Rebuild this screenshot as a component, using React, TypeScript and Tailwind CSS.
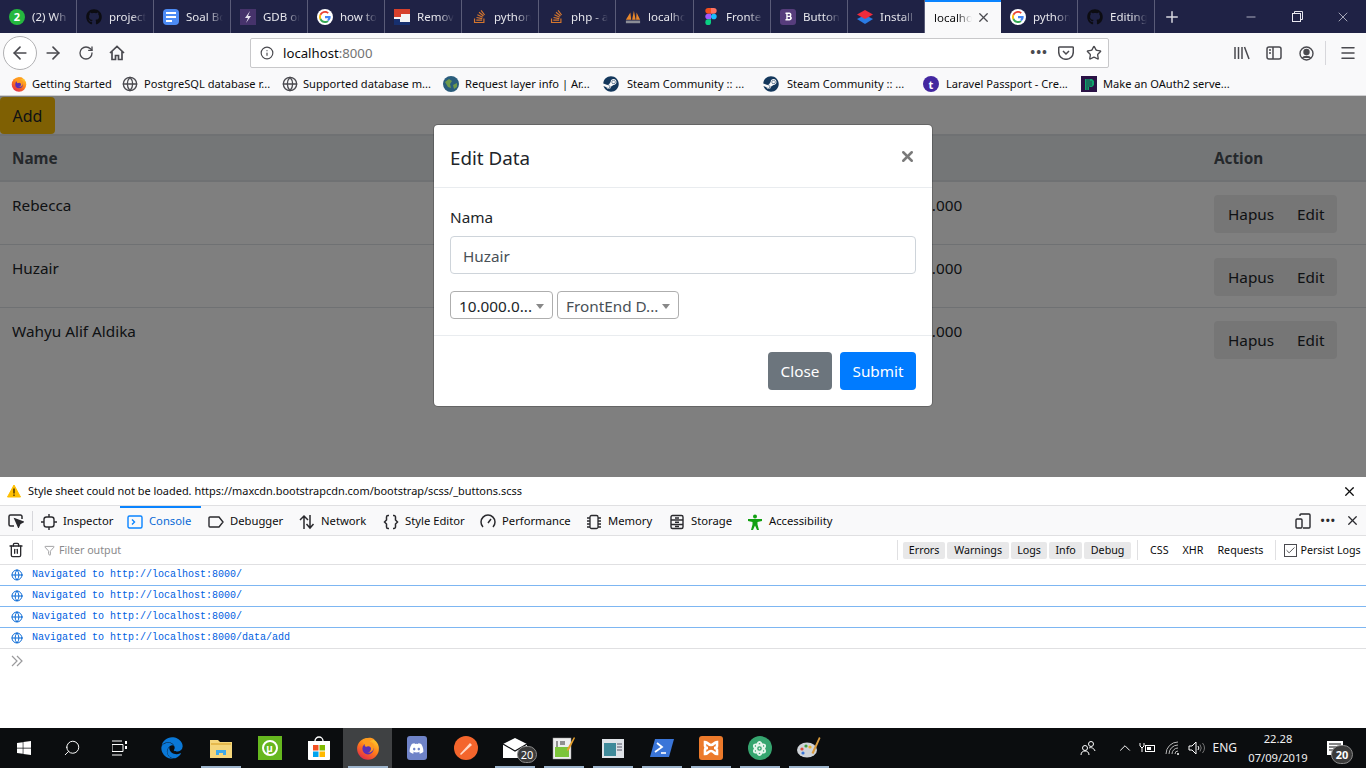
import { ReactNode } from 'react';
import {
  ArrowLeft, ArrowRight, RotateCw, Info, Star, X, Plus, Minus, Trash2, Filter, Globe, Menu, Check, ChevronUp, Search,
} from 'lucide-react';
import { FaDiscord, FaEdge, FaGithub, FaSteam, FaStackOverflow, FaWindows, FaAtom, FaBold } from 'react-icons/fa';

const Google = ({ size = 16 }: { size?: number }) => (
  <svg width={size} height={size} viewBox="0 0 48 48">
    <circle cx="24" cy="24" r="24" fill="#fff" />
    <path fill="#EA4335" d="M24 11c3.400 0 5.900 1.200 7.800 3l3.700-3.700C33 8 29 6 24 6 17 6 11 10 8 16l4.400 3.400C14 14.600 18.600 11 24 11z" />
    <path fill="#4285F4" d="M41 24.500c0-1.300-.1-2.300-.3-3.500H24v6.500h9.700c-.4 2.100-1.600 4-3.500 5.300l4.300 3.300C38.800 32.500 41 28.800 41 24.500z" />
    <path fill="#FBBC05" d="M12.400 28.600C12 27.300 11.700 25.700 11.700 24s.3-3.300.7-4.600L8 16c-1.300 2.400-2 5.100-2 8s.7 5.600 2 8z" />
    <path fill="#34A853" d="M24 42c5 0 9-1.600 11-4.500l-4.300-3.300c-1.600 1.100-3.800 1.800-6.700 1.800-5.400 0-10-3.600-11.600-8.400L8 32c3 6 9 10 16 10z" />
  </svg>
);

const Firefox = ({ size = 16 }: { size?: number }) => (
  <svg width={size} height={size} viewBox="0 0 32 32">
    <defs>
      <linearGradient id="ffg" x1="0.8" y1="0" x2="0.2" y2="1">
        <stop offset="0" stopColor="#ffd32e" />
        <stop offset="0.5" stopColor="#ff7a1a" />
        <stop offset="1" stopColor="#e0234f" />
      </linearGradient>
    </defs>
    <circle cx="16" cy="17" r="14.500" fill="url(#ffg)" />
    <circle cx="16" cy="17" r="7.500" fill="#5b2fb5" />
    <path d="M9 6c4-4 11-5 16-1-3 0-6 1-7 3 3 0 6 2 6 6 0 5-4 9-9 8 3 0 5-2 5-5 0-2-2-4-5-3-3 1-4-1-3-3-2 0-3-2-3-5z" fill="#ff9a1f" />
  </svg>
);

const Figma = () => (
  <svg width="12" height="17" viewBox="0 0 12 18">
    <path fill="#f24e1e" d="M0 3a3 3 0 013-3h3v6H3a3 3 0 01-3-3z" />
    <path fill="#ff7262" d="M6 0h3a3 3 0 010 6H6z" />
    <path fill="#a259ff" d="M0 9a3 3 0 013-3h3v6H3a3 3 0 01-3-3z" />
    <circle cx="9" cy="9" r="3" fill="#1abcfe" />
    <path fill="#0acf83" d="M0 15a3 3 0 013-3h3v3a3 3 0 01-6 0z" />
  </svg>
);

const tabs: { label: string; icon: ReactNode; w?: string }[] = [
  {
    label: '(2) Wh',
    icon: <span className="flex h-4 w-4 items-center justify-center rounded-full bg-[#25b83f] text-[11px] font-bold leading-none text-white">2</span>,
  },
  { label: 'project', icon: <FaGithub size={16} className="text-[#0c0c12]" /> },
  {
    label: 'Soal Bo',
    icon: (
      <span className="flex h-4 w-4 flex-col justify-center gap-[2px] rounded-sm bg-[#4c8bf5] px-[3px]">
        <span className="h-[2px] bg-white" />
        <span className="h-[2px] bg-white" />
        <span className="h-[2px] w-[6px] bg-white" />
      </span>
    ),
  },
  {
    label: 'GDB or',
    icon: (
      <svg width="16" height="16" viewBox="0 0 16 16">
        <rect width="16" height="16" fill="#46336b" />
        <path d="M10 2L5 9h3l-2 5 5-7H8z" fill="#e8e4f0" />
      </svg>
    ),
  },
  { label: 'how to', icon: <Google /> },
  {
    label: 'Remov',
    icon: (
      <svg width="16" height="16" viewBox="0 0 16 16">
        <rect width="16" height="16" fill="#f4f4f4" />
        <path d="M0 0h16v5H7v3H0z" fill="#d6402b" />
        <path d="M0 10h6v3h10v3H0z" fill="#17306f" />
      </svg>
    ),
  },
  { label: 'python', icon: <FaStackOverflow size={15} className="text-[#d5762e]" /> },
  { label: 'php - a', icon: <FaStackOverflow size={15} className="text-[#d5762e]" /> },
  {
    label: 'localho',
    w: 'w-[78px]',
    icon: (
      <svg width="18" height="16" viewBox="0 0 18 16">
        <path d="M1 11L6 3l1 8zM8 11l2-10 2 10zM12.500 11L13 3l4 8z" fill="#e8872b" />
        <rect x="1" y="12" width="16" height="3" fill="#8b8d96" />
      </svg>
    ),
  },
  { label: 'Fronte', icon: <Figma /> },
  {
    label: 'Button',
    icon: <span className="flex h-4 w-4 items-center justify-center rounded-[3px] bg-[#563d7c]"><FaBold size={9} className="text-white" /></span>,
  },
  {
    label: 'Install',
    icon: (
      <svg width="16" height="16" viewBox="0 0 16 16">
        <path d="M0 10l8-4 8 4-8 5z" fill="#2a7be4" />
        <path d="M0 5.500L8 1l8 4.500-8 4.500z" fill="#ee2b3c" />
      </svg>
    ),
  },
];

const Tab = ({ label, icon, w = 'w-[77px]' }: { label: string; icon: ReactNode; w?: string }) => (
  <div className={`flex h-[33px] shrink-0 items-center border-r border-[#5a5c78] pl-[9px] ${w}`}>
    <span className="flex w-4 shrink-0 items-center justify-center">{icon}</span>
    <span className="ml-[7px] w-[37px] overflow-hidden whitespace-nowrap text-[11.500px] text-[#e6e6ec] [mask-image:linear-gradient(to_right,black_60%,transparent)]">
      {label}
    </span>
  </div>
);

const bookmarks: { label: string; icon: ReactNode; w: string; gap: string }[] = [
  { label: 'Getting Started', icon: <Firefox />, w: 'w-[111px]', gap: 'gap-[5px]' },
  { label: 'PostgreSQL database r...', icon: <Globe size={16} className="text-[#4a4a4f]" />, w: 'w-[160px]', gap: 'gap-[6px]' },
  { label: 'Supported database m...', icon: <Globe size={16} className="text-[#4a4a4f]" />, w: 'w-[161px]', gap: 'gap-[5px]' },
  {
    label: 'Request layer info | Ar...',
    icon: (
      <svg width="16" height="16" viewBox="0 0 16 16">
        <circle cx="8" cy="8" r="8" fill="#2a5d7c" />
        <path d="M2 6l4-3 3 2-2 3 1 4-3-1zM10 9l4-2 0 4-3 2z" fill="#6f9a4a" />
      </svg>
    ),
    w: 'w-[160px]',
    gap: 'gap-[6px]',
  },
  { label: 'Steam Community :: ...', icon: <FaSteam size={16} className="text-[#14385c]" />, w: 'w-[160px]', gap: 'gap-[8px]' },
  { label: 'Steam Community :: ...', icon: <FaSteam size={16} className="text-[#14385c]" />, w: 'w-[160px]', gap: 'gap-[8px]' },
  {
    label: 'Laravel Passport - Cre...',
    icon: <span className="flex h-4 w-4 items-center justify-center rounded-full bg-[#4327a0] text-[11px] font-bold leading-none text-white">t</span>,
    w: 'w-[158px]',
    gap: 'gap-[7px]',
  },
  {
    label: 'Make an OAuth2 serve...',
    icon: (
      <svg width="16" height="16" viewBox="0 0 16 16">
        <rect width="16" height="16" fill="#2a1245" />
        <path d="M4 3h7l2 2v4l-2 2H8v3H4z" fill="#0fa36b" />
        <path d="M6 3v11M8 3v8M10 5v5" stroke="#2a1245" strokeWidth="0.700" />
      </svg>
    ),
    w: 'w-[150px]',
    gap: 'gap-[6px]',
  },
];

const people = [
  { name: 'Rebecca', job: 'FrontEnd Developer' },
  { name: 'Huzair', job: 'FrontEnd Developer' },
  { name: 'Wahyu Alif Aldika', job: 'BackEnd Developer' },
];

const devTabs: { label: string; icon: ReactNode; w: string; active?: boolean }[] = [
  {
    label: 'Inspector',
    w: 'w-[86px]',
    icon: (
      <svg width="16" height="16" viewBox="0 0 16 16" fill="none" stroke="#2a2a2e" strokeWidth="1.400">
        <rect x="3" y="3" width="10" height="10" rx="2.500" />
        <path d="M8 0v3M8 13v3M0 8h3M13 8h3" />
      </svg>
    ),
  },
  {
    label: 'Console',
    w: 'w-[81px]',
    active: true,
    icon: (
      <svg width="16" height="16" viewBox="0 0 16 16" fill="none" stroke="#0a84ff" strokeWidth="1.400">
        <rect x="1" y="2" width="14" height="12" rx="1.500" />
        <path d="M5 5.500L7.500 8 5 10.500" />
      </svg>
    ),
  },
  {
    label: 'Debugger',
    w: 'w-[91px]',
    icon: (
      <svg width="16" height="16" viewBox="0 0 16 16" fill="none" stroke="#2a2a2e" strokeWidth="1.400">
        <path d="M2 3h9l4 5-4 5H2a1 1 0 01-1-1V4a1 1 0 011-1z" />
      </svg>
    ),
  },
  {
    label: 'Network',
    w: 'w-[84px]',
    icon: (
      <svg width="16" height="16" viewBox="0 0 16 16" fill="none" stroke="#2a2a2e" strokeWidth="1.500">
        <path d="M5 15V2M1 6l4-4 4 4M11 1v13M7.500 10l3.500 4 3.500-4" />
      </svg>
    ),
  },
  {
    label: 'Style Editor',
    w: 'w-[97px]',
    icon: (
      <svg width="16" height="16" viewBox="0 0 16 16" fill="none" stroke="#2a2a2e" strokeWidth="1.500">
        <path d="M6 1.500H5a1.500 1.500 0 00-1.500 1.500v3L1.500 8l2 2v3A1.500 1.500 0 005 14.500h1M10 1.500h1A1.500 1.500 0 0112.500 3v3l2 2-2 2v3a1.500 1.500 0 01-1.500 1.500h-1" />
      </svg>
    ),
  },
  {
    label: 'Performance',
    w: 'w-[106px]',
    icon: (
      <svg width="16" height="16" viewBox="0 0 16 16" fill="none" stroke="#2a2a2e" strokeWidth="1.500">
        <path d="M3 13a7 7 0 1110 0M8 9l3-4" />
      </svg>
    ),
  },
  {
    label: 'Memory',
    w: 'w-[83px]',
    icon: (
      <svg width="16" height="16" viewBox="0 0 16 16" fill="none" stroke="#2a2a2e" strokeWidth="1.300">
        <rect x="4" y="1.500" width="8" height="13" rx="1.500" />
        <path d="M1 4h3M1 7h3M1 10h3M1 13h3M12 4h3M12 7h3M12 10h3M12 13h3" />
      </svg>
    ),
  },
  {
    label: 'Storage',
    w: 'w-[78px]',
    icon: (
      <svg width="16" height="16" viewBox="0 0 16 16" fill="none" stroke="#2a2a2e" strokeWidth="1.400">
        <rect x="2" y="1.500" width="12" height="13" rx="1.500" />
        <path d="M2 6h12M2 10.500h12M6 4h4M6 8.200h4M6 12.500h4" />
      </svg>
    ),
  },
  {
    label: 'Accessibility',
    w: 'w-[100px]',
    icon: (
      <svg width="16" height="16" viewBox="0 0 16 16" fill="#12a012">
        <circle cx="8" cy="2.500" r="2" />
        <path d="M1 5h14v2l-4.500 1v2.500L12 16h-2l-2-4.500L6 16H4l1.500-5.500V8L1 7z" />
      </svg>
    ),
  },
];

const levels = [
  { label: 'Errors', w: 'w-[42px]' },
  { label: 'Warnings', w: 'w-[62px]' },
  { label: 'Logs', w: 'w-[36px]' },
  { label: 'Info', w: 'w-[33px]' },
  { label: 'Debug', w: 'w-[47px]' },
];

const logs = ['http://localhost:8000/', 'http://localhost:8000/', 'http://localhost:8000/', 'http://localhost:8000/data/add'];

const Bar = ({ bottom = true }: { bottom?: boolean }) => (
  <span className={bottom ? 'absolute bottom-0 left-1/2 h-[2px] w-[40px] -translate-x-1/2 bg-[#9db4cc]' : 'hidden'} />
);

const TaskItem = ({ children, open, active }: { children: ReactNode; open?: boolean; active?: boolean }) => (
  <div className={`relative flex h-10 w-[49px] shrink-0 items-center justify-center ${active ? 'bg-[#3f4143]' : ''}`}>
    {children}
    <Bar bottom={!!open} />
  </div>
);

const Badge = ({ className }: { className: string }) => (
  <span className={`absolute flex h-[17px] w-[20px] items-center justify-center rounded-full border border-[#8a8a8a] bg-[#3a3a3a] text-[11px] leading-none text-white ${className}`}>
    20
  </span>
);

export default function App() {
  return (
    <div className="flex h-[768px] w-[1366px] flex-col overflow-hidden bg-white font-['Noto_Sans',sans-serif] text-[11.250px] text-[#0c0c0d]">
      {/* Tab strip */}
      <div className="flex h-[33px] shrink-0 items-center bg-[#1f2245]">
        {tabs.map((t) => <Tab key={t.label} {...t} />)}
        <div className="flex h-[33px] w-[76px] shrink-0 items-center border-t-2 border-[#0a84ff] bg-[#f9f9fa] pl-[9px]">
          <span className="w-[38px] overflow-hidden whitespace-nowrap text-[11.500px] text-[#0c0c0d] [mask-image:linear-gradient(to_right,black_60%,transparent)]">localho</span>
          <X size={15} className="ml-[4px] text-[#4a4a4f]" />
        </div>
        <div className="flex h-[33px] w-[77px] shrink-0 items-center border-r border-[#5a5c78] pl-[9px]">
          <Google />
          <span className="ml-[7px] w-[37px] overflow-hidden whitespace-nowrap text-[11.500px] text-[#e6e6ec] [mask-image:linear-gradient(to_right,black_60%,transparent)]">python</span>
        </div>
        <Tab label="Editing" icon={<FaGithub size={16} className="text-[#0c0c12]" />} />
        <Plus size={18} className="ml-[8px] text-[#d8d8e0]" />
        <div className="ml-auto flex items-center text-[#e8e8f0]">
          <span className="flex w-[46px] justify-center"><Minus size={14} strokeWidth={1.200} /></span>
          <span className="flex w-[46px] justify-center">
            <svg width="11" height="11" viewBox="0 0 11 11" fill="none" stroke="currentColor">
              <rect x="0.500" y="2.500" width="8" height="8" />
              <path d="M2.500 2.500v-2h8v8h-2" />
            </svg>
          </span>
          <span className="flex w-[46px] justify-center"><X size={16} strokeWidth={1} /></span>
        </div>
      </div>

      {/* Nav bar */}
      <div className="flex h-[40px] shrink-0 items-center bg-[#f9f9fa] text-[#4a4a4f]">
        <span className="ml-[3px] flex h-[34px] w-[34px] items-center justify-center rounded-full border border-[#b1b1b3] bg-white">
          <ArrowLeft size={20} />
        </span>
        <ArrowRight size={20} className="ml-[6px]" />
        <RotateCw size={16} className="ml-[15px]" />
        <svg width="16" height="16" viewBox="0 0 16 16" className="ml-[15px]" fill="none" stroke="currentColor" strokeWidth="1.700">
          <path d="M1 8l7-6.500L15 8M3 6.500V14.500h3.500v-4h3v4H13V6.500" />
        </svg>
        <div className="ml-[125px] flex h-[30px] w-[859px] items-center rounded-[2px] border border-[#c8c8ca] bg-white pl-[9px] pr-[6px]">
          <Info size={14} />
          <span className="ml-[9px] pt-px text-[13.200px] text-[#0c0c0d]">localhost<span className="text-[#737373]">:8000</span></span>
          <span className="ml-auto text-[13px] font-bold tracking-[1px]">•••</span>
          <svg width="16" height="14" viewBox="0 0 16 14" className="ml-[10px]" fill="none" stroke="currentColor" strokeWidth="1.500">
            <path d="M1.500 1h13a.800.800 0 01.800.800V6a7.300 7.300 0 01-14.600 0V1.800A.800.800 0 011.500 1zM5 5l3 3 3-3" />
          </svg>
          <Star size={16} className="ml-[12px]" />
        </div>
        <svg width="16" height="14" viewBox="0 0 16 14" className="ml-[125px]" stroke="currentColor" strokeWidth="1.500">
          <path d="M1 1v12M4.500 1v12M8 1v12M10.500 1l4.500 12" />
        </svg>
        <svg width="16" height="14" viewBox="0 0 16 14" className="ml-[16px]" fill="none" stroke="currentColor" strokeWidth="1.500">
          <rect x="1" y="1" width="14" height="12" rx="2" />
          <path d="M7 1v12M3 4h2M3 7h2" />
        </svg>
        <svg width="15" height="15" viewBox="0 0 15 15" className="ml-[17px]" fill="none" stroke="currentColor" strokeWidth="1.400">
          <circle cx="7.500" cy="7.500" r="6.500" />
          <circle cx="7.500" cy="6" r="2.500" fill="currentColor" />
          <path d="M3.500 12c1-2 7-2 8 0" fill="currentColor" />
        </svg>
        <span className="ml-[11px] h-[24px] w-px bg-[#d7d7db]" />
        <Menu size={18} className="ml-[13px]" />
      </div>

      {/* Bookmarks */}
      <div className="flex h-[23px] shrink-0 items-start border-b border-[#cfcfd1] bg-[#f9f9fa] pl-[11px]">
        {bookmarks.map((b, i) => (
          <div key={i} className={`flex h-[22px] shrink-0 items-center ${b.gap} ${b.w}`}>
            <span className="flex w-4 shrink-0 justify-center">{b.icon}</span>
            <span className="whitespace-nowrap text-[11.100px] text-[#0c0c0d]">{b.label}</span>
          </div>
        ))}
      </div>

      {/* Page + modal */}
      <div className="relative h-[381px] shrink-0 overflow-hidden bg-white text-[15.300px] text-[#212529]">
        <button className="mt-px block h-[37px] w-[55px] rounded bg-[#ffc107] text-[16px]">Add</button>
        <div className="grid h-[48px] grid-cols-[432px_440px_330px_1fr] items-center border-y-2 border-[#dee2e6] bg-[#e9ecef] font-bold text-[#495057]">
          <span className="px-3">Name</span>
          <span className="px-3">Job</span>
          <span className="px-3">Salary</span>
          <span className="px-3">Action</span>
        </div>
        {people.map((p, i) => (
          <div key={p.name} className={`grid h-[63px] grid-cols-[432px_440px_330px_1fr] ${i < 2 ? 'border-b border-[#dee2e6]' : ''}`}>
            <span className="px-3 pt-3">{p.name}</span>
            <span className="px-3 pt-3">{p.job}</span>
            <span className="px-3 pt-3">10.000.000</span>
            <div className="px-3 pt-[13px]">
              <div className="flex h-[38px] w-[123px] items-center rounded bg-[#ececec] pt-px">
                <span className="pl-[14px]">Hapus</span>
                <span className="pl-[23px]">Edit</span>
              </div>
            </div>
          </div>
        ))}

        <div className="absolute inset-0 bg-black/50" />
        <div className="absolute left-[433px] top-[28px] w-[500px] rounded-[5px] border border-black/20 bg-white bg-clip-padding">
          <div className="flex h-[63px] items-center justify-between border-b border-[#e9ecef] px-4 pt-[5px]">
            <span className="text-[18.800px]">Edit Data</span>
            <X size={17} strokeWidth={3.500} className="mb-[4px] text-[#7a7a7a]" />
          </div>
          <div className="border-b border-[#e9ecef] px-4 pb-4 pt-[16px]">
            <div className="h-[32px] pt-px leading-[24px]">Nama</div>
            <div className="flex h-[38px] items-center rounded border border-[#ced4da] px-3 pt-[2px] text-[#495057]">Huzair</div>
            <div className="mt-[17px] flex gap-1 text-[#495057]">
              <div className="flex h-[28px] w-[103px] items-center justify-between rounded border border-[#aeaeae] pl-2 pr-[8px] pt-[2px]">
                <span className="whitespace-nowrap text-[#212529]">10.000.0...</span>
                <span className="h-0 w-0 border-x-[4px] border-t-[5px] border-x-transparent border-t-[#888]" />
              </div>
              <div className="flex h-[28px] w-[122px] items-center justify-between rounded border border-[#aeaeae] pl-2 pr-[8px] pt-[2px]">
                <span className="whitespace-nowrap">FrontEnd D...</span>
                <span className="h-0 w-0 border-x-[4px] border-t-[5px] border-x-transparent border-t-[#888]" />
              </div>
            </div>
          </div>
          <div className="flex justify-end gap-2 p-4">
            <button className="h-[38px] w-[64px] rounded bg-[#6c757d] text-white">Close</button>
            <button className="h-[38px] w-[76px] rounded bg-[#007bff] text-white">Submit</button>
          </div>
        </div>
      </div>

      {/* Notification */}
      <div className="flex h-[29px] shrink-0 items-center border-b border-[#e0e0e2] bg-white pl-[7px] pr-[9px] text-[10.950px]">
        <svg width="14" height="14" viewBox="0 0 14 14">
          <path d="M7 1L13.500 13H.5z" fill="#ffbf00" stroke="#ffbf00" strokeLinejoin="round" />
          <rect x="6.300" y="4.500" width="1.400" height="5" fill="#3e2800" />
          <rect x="6.300" y="10.500" width="1.400" height="1.400" fill="#3e2800" />
        </svg>
        <span className="ml-[7px]">Style sheet could not be loaded. https://maxcdn.bootstrapcdn.com/bootstrap/scss/_buttons.scss</span>
        <X size={15} strokeWidth={2} className="ml-auto text-[#0c0c0d]" />
      </div>

      {/* Devtools toolbar */}
      <div className="flex h-[30px] shrink-0 items-center border-b border-[#e0e0e2] bg-[#f9f9fa] text-[#0c0c0d]">
        <span className="flex w-[32px] justify-center">
          <svg width="16" height="15" viewBox="0 0 16 15" fill="none" stroke="#2a2a2e" strokeWidth="1.500">
            <path d="M6 13H2.500A1.500 1.500 0 011 11.500v-8A1.500 1.500 0 012.500 2h10A1.500 1.500 0 0114 3.500V6" />
            <path d="M7 6l8 3-3 1.500L10.500 14z" fill="#2a2a2e" />
          </svg>
        </span>
        <span className="h-[20px] w-px bg-[#d7d7db]" />
        <span className="w-px" />
        {devTabs.map((t) => (
          <div
            key={t.label}
            className={`flex h-[29px] shrink-0 items-center gap-[6px] border-t-2 pl-[7px] ${t.w} ${t.active ? 'border-[#0a84ff] text-[#0a6ad6]' : 'border-transparent'}`}
          >
            {t.icon}
            <span className="whitespace-nowrap">{t.label}</span>
          </div>
        ))}
        <div className="ml-auto flex items-center pr-[6px] text-[#2a2a2e]">
          <svg width="16" height="16" viewBox="0 0 16 16" fill="none" stroke="currentColor" strokeWidth="1.400">
            <rect x="1" y="6" width="6" height="9" rx="1" />
            <path d="M5 3V2a1 1 0 011-1h8a1 1 0 011 1v12a1 1 0 01-1 1H8" />
          </svg>
          <span className="ml-[10px] text-[11px] font-bold tracking-[1px]">•••</span>
          <X size={15} className="ml-[9px]" />
        </div>
      </div>

      {/* Filter bar */}
      <div className="flex h-[29px] shrink-0 items-center border-b border-[#e0e0e2] bg-white text-[10.700px]">
        <span className="flex w-[32px] justify-center"><Trash2 size={16} className="text-[#2a2a2e]" /></span>
        <span className="h-[20px] w-px bg-[#e0e0e2]" />
        <Filter size={11} className="ml-[11px] text-[#9a9a9c]" />
        <span className="ml-[4px] text-[#8a8a8c]">Filter output</span>
        <span className="ml-[776px] h-[20px] w-px bg-[#e0e0e2]" />
        <div className="ml-[5px] flex gap-[2px]">
          {levels.map((l) => (
            <span key={l.label} className={`flex h-[17px] items-center justify-center rounded-[2px] bg-[#e8e8e9] ${l.w}`}>{l.label}</span>
          ))}
        </div>
        <span className="ml-[6px] h-[20px] w-px bg-[#e0e0e2]" />
        <span className="ml-[12px]">CSS</span>
        <span className="ml-[14px]">XHR</span>
        <span className="ml-[14px]">Requests</span>
        <span className="ml-[12px] h-[20px] w-px bg-[#e0e0e2]" />
        <span className="ml-[8px] flex h-[13px] w-[13px] items-center justify-center border border-[#4a4a4f]"><Check size={11} strokeWidth={1.500} /></span>
        <span className="ml-[3px]">Persist Logs</span>
      </div>

      {/* Console */}
      <div className="h-[163px] shrink-0 bg-white">
        {logs.map((l, i) => (
          <div key={i} className={`flex h-[21px] items-center border-b pl-[11px] ${i === 3 ? 'border-[#e0e0e2]' : 'border-[#7db6f2]'}`}>
            <Globe size={12} className="text-[#0a6ad6]" />
            <span className="ml-[9px] pb-px font-['Liberation_Mono',monospace] text-[10px] text-[#0060df]">Navigated to {l}</span>
          </div>
        ))}
        <div className="pl-[11px] pt-[6px] text-[#9a9a9c]">
          <svg width="12" height="12" viewBox="0 0 12 12" fill="none" stroke="currentColor" strokeWidth="1.200">
            <path d="M1 1l5 5-5 5M6 1l5 5-5 5" />
          </svg>
        </div>
      </div>

      {/* Taskbar */}
      <div className="flex h-10 shrink-0 items-center bg-[#0b0d0f] text-white">
        <div className="flex h-10 w-[48px] items-center justify-center"><FaWindows size={16} /></div>
        <div className="flex h-10 w-[48px] items-center justify-center"><Search size={18} strokeWidth={1.300} className="-scale-x-100" /></div>
        <div className="flex h-10 w-[48px] items-center justify-center">
          <svg width="16" height="16" viewBox="0 0 16 16" fill="none" stroke="white" strokeWidth="1">
            <path d="M0 1h10M0 15h10M0 4.500h11v7H0z" />
            <rect x="13" y="1" width="2" height="3" fill="white" stroke="none" />
            <rect x="13" y="6" width="2" height="3" fill="white" stroke="none" />
          </svg>
        </div>
        <span className="w-[3px]" />
        <TaskItem><FaEdge size={22} className="text-[#0a78d7]" /></TaskItem>
        <TaskItem open>
          <svg width="22" height="20" viewBox="0 0 22 20">
            <path d="M0 2h8l2 2h12v16H0z" fill="#f5d67b" />
            <rect x="1" y="5" width="20" height="2" fill="#e5b94d" />
            <path d="M6 12h10v5h-3v-2H9v2H6z" fill="#3fa9e8" />
          </svg>
        </TaskItem>
        <TaskItem>
          <span className="flex h-6 w-6 items-center justify-center bg-[#66b71f]">
            <span className="flex h-4 w-4 items-center justify-center rounded-full border-[2px] border-white text-[10px] font-bold leading-none">µ</span>
          </span>
        </TaskItem>
        <TaskItem>
          <svg width="24" height="24" viewBox="0 0 24 24">
            <path d="M8 5a4 4 0 018 0" fill="none" stroke="white" strokeWidth="1.300" />
            <path d="M1 5h22v18a1 1 0 01-1 1H2a1 1 0 01-1-1z" fill="white" />
            <rect x="6" y="9" width="5.500" height="5.500" fill="#f25022" />
            <rect x="12.500" y="9" width="5.500" height="5.500" fill="#7fba00" />
            <rect x="6" y="15.500" width="5.500" height="5.500" fill="#00a4ef" />
            <rect x="12.500" y="15.500" width="5.500" height="5.500" fill="#ffb900" />
          </svg>
        </TaskItem>
        <TaskItem open active><Firefox size={24} /></TaskItem>
        <TaskItem>
          <span className="flex h-6 w-[20px] items-center justify-center rounded-[3px] bg-[#6f83c8]"><FaDiscord size={15} className="text-white" /></span>
        </TaskItem>
        <TaskItem>
          <svg width="24" height="24" viewBox="0 0 24 24">
            <circle cx="12" cy="12" r="12" fill="#f4652c" />
            <path d="M6 18L16 7l2 2L7 19z" fill="#ffd9c7" />
          </svg>
        </TaskItem>
        <TaskItem open>
          <svg width="24" height="20" viewBox="0 0 24 20">
            <path d="M0 6l12-6 12 6v14H0z" fill="white" />
            <path d="M0 6l12 7 12-7" fill="none" stroke="#0b0d0f" strokeWidth="1.200" />
          </svg>
          <Badge className="left-[27px] top-[18px]" />
        </TaskItem>
        <TaskItem open>
          <svg width="24" height="24" viewBox="0 0 24 24">
            <rect x="1" y="2" width="18" height="21" fill="#eee" stroke="#999" strokeWidth="0.500" />
            <rect x="3" y="11" width="14" height="10" fill="#7cc53a" />
            <path d="M5 5v6M8 6h5M8 8h5" stroke="#333" />
            <path d="M22 1l1 1-6 12-2 1 0-2z" fill="#e8a02c" />
          </svg>
        </TaskItem>
        <TaskItem open>
          <svg width="22" height="19" viewBox="0 0 22 19">
            <rect width="22" height="19" fill="#dfe3e8" />
            <rect x="2" y="4" width="12" height="13" fill="#3f8a9a" />
            <path d="M15 5h5M15 8h5M15 11h5" stroke="#556" />
          </svg>
        </TaskItem>
        <TaskItem open>
          <svg width="24" height="18" viewBox="0 0 24 18">
            <path d="M5 0h19l-5 18H0z" fill="#3a75d8" />
            <path d="M7 4l5 4-7 5" fill="none" stroke="white" strokeWidth="1.800" />
            <path d="M11 14h5" stroke="white" strokeWidth="1.600" />
          </svg>
        </TaskItem>
        <TaskItem open>
          <span className="flex h-6 w-6 items-center justify-center rounded-[3px] bg-[#ec7a2b]">
            <svg width="18" height="18" viewBox="0 0 18 18" fill="none" stroke="white" strokeWidth="2.600">
              <path d="M3 3c3 0 3 3 6 3s3-3 6-3v4c0 2-3 2-3 2s3 0 3 2v4c-3 0-3-3-6-3s-3 3-6 3v-4c0-2 3-2 3-2s-3 0-3-2z" />
            </svg>
          </span>
        </TaskItem>
        <TaskItem open>
          <span className="flex h-6 w-6 items-center justify-center rounded-full bg-[#36a56f]"><FaAtom size={15} className="text-[#e6f5ec]" /></span>
        </TaskItem>
        <TaskItem open>
          <svg width="24" height="24" viewBox="0 0 24 24">
            <ellipse cx="10" cy="14" rx="10" ry="7.500" fill="#cfd3d8" />
            <circle cx="5" cy="13" r="1.600" fill="#e04a3a" />
            <circle cx="9" cy="10" r="1.600" fill="#3fa040" />
            <circle cx="13" cy="11" r="1.600" fill="#e8b02c" />
            <circle cx="6" cy="17" r="1.600" fill="#3a75d8" />
            <path d="M22 1l1.500 1-7 16-2-1z" fill="#d99a3c" />
          </svg>
        </TaskItem>
        <div className="ml-auto flex h-10 items-center">
          <svg width="16" height="16" viewBox="0 0 16 16" fill="none" stroke="white" strokeWidth="1" className="mr-[20px]">
            <circle cx="5" cy="8" r="2.500" />
            <path d="M1 15c0-3 2-4 4-4s4 1 4 4" />
            <circle cx="11" cy="4" r="2.500" />
            <path d="M9 8c2-1 5 0 6 3" />
          </svg>
          <ChevronUp size={18} strokeWidth={1.300} className="mr-[5px]" />
          <svg width="16" height="12" viewBox="0 0 16 12" fill="none" stroke="white" strokeWidth="1" className="mr-[10px]">
            <path d="M1 1v3l2 2 2-2V1M3 6v4" />
            <rect x="6.500" y="3.500" width="9" height="6" />
            <rect x="8" y="5" width="4" height="3" fill="white" stroke="none" />
          </svg>
          <svg width="16" height="14" viewBox="0 0 16 14" fill="none" stroke="#b8b8b8" strokeWidth="1" className="mr-[7px]">
            <path d="M1 13A12 12 0 0113 1M4 13a9 9 0 019-9M7 13a6 6 0 016-6M10 13a3 3 0 013-3" />
            <circle cx="13" cy="13" r="1" fill="white" stroke="none" />
          </svg>
          <svg width="17" height="14" viewBox="0 0 17 14" fill="none" stroke="white" strokeWidth="1" className="mr-[7px]">
            <path d="M1 5h3l4-4v12l-4-4H1z" />
            <path d="M10 5a3 3 0 010 4" />
            <path d="M12 3.500a6 6 0 010 7M14.500 2a8 8 0 010 10" stroke="#777" />
          </svg>
          <span className="mr-[11px] text-[12px] text-[#f0f0f0]">ENG</span>
          <div className="mr-[19px] flex w-[60px] flex-col items-center text-[11.200px] leading-[19px] text-[#f0f0f0]">
            <span>22.28</span>
            <span className="whitespace-nowrap">07/09/2019</span>
          </div>
          <div className="relative mr-[23px] flex h-10 w-[16px] items-center">
            <svg width="16" height="14" viewBox="0 0 16 14">
              <rect width="16" height="14" fill="white" />
              <path d="M2 3h12M2 6h12M2 9h8" stroke="#0b0d0f" />
            </svg>
            <Badge className="left-[4px] top-[17px] !h-[19px] !w-[22px] font-bold" />
          </div>
        </div>
      </div>
    </div>
  );
}
